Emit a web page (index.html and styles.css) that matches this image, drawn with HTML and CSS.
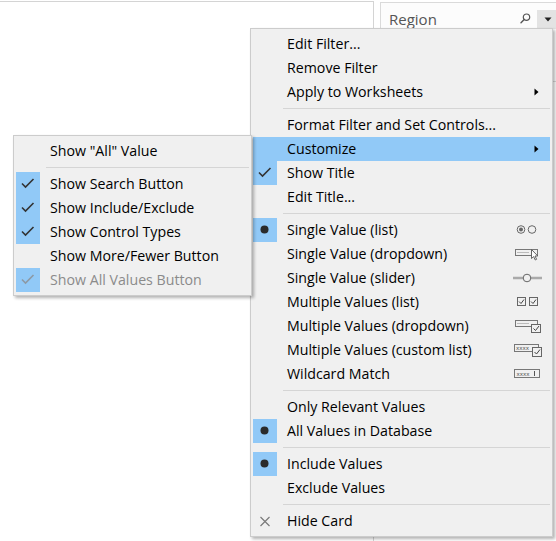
FILE: index.html
```html
<!DOCTYPE html>
<html>
<head>
<meta charset="utf-8">
<link rel="stylesheet" href="styles.css">
</head>
<body>
<div class="page">
  <div class="sheet"></div>
  <div class="card">
    <div class="card-head">
      <span class="card-title">Region</span>
      <svg class="search" width="11" height="11" viewBox="0 0 11 11"><circle cx="6.5" cy="4.2" r="3.2" fill="none" stroke="#555" stroke-width="1.2"/><path d="M4.2 6.6 L1 9.8" stroke="#555" stroke-width="1.4" stroke-linecap="round"/></svg>
      <span class="dd-btn"><svg width="8" height="5" viewBox="0 0 8 5"><polygon points="0.5,0.5 7.5,0.5 4,4.5" fill="#222"/></svg></span>
    </div>
  </div>
</div>

<div class="menu main-menu">
  <div class="item"><span class="box"></span><span class="label">Edit Filter...</span></div>
  <div class="item"><span class="box"></span><span class="label">Remove Filter</span></div>
  <div class="item"><span class="box"></span><span class="label">Apply to Worksheets</span><svg class="arrow" width="5" height="8" viewBox="0 0 5 8"><polygon points="0.5,0.5 4.5,4 0.5,7.5" fill="#000"/></svg></div>
  <div class="sep"></div>
  <div class="item"><span class="box"></span><span class="label">Format Filter and Set Controls...</span></div>
  <div class="item hot"><span class="box"></span><span class="label">Customize</span><svg class="arrow" width="5" height="8" viewBox="0 0 5 8"><polygon points="0.5,0.5 4.5,4 0.5,7.5" fill="#000"/></svg></div>
  <div class="item"><span class="box on"><svg width="24" height="24" viewBox="0 0 24 24"><path d="M6 11.5 L9.5 15 L17.5 7" fill="none" stroke="#333" stroke-width="1.6"/></svg></span><span class="label">Show Title</span></div>
  <div class="item"><span class="box"></span><span class="label">Edit Title...</span></div>
  <div class="sep"></div>
  <div class="item"><span class="box on"><svg width="24" height="24" viewBox="0 0 24 24"><circle cx="11.5" cy="11.5" r="4" fill="#2b2b2b"/></svg></span><span class="label">Single Value (list)</span>
    <svg class="ico" width="30" height="16" viewBox="0 0 30 16"><circle cx="8" cy="7.5" r="3.8" fill="none" stroke="#666" stroke-width="1"/><circle cx="8" cy="7.5" r="2" fill="#666"/><circle cx="19" cy="7.5" r="3.8" fill="none" stroke="#666" stroke-width="1"/></svg></div>
  <div class="item"><span class="box"></span><span class="label">Single Value (dropdown)</span>
    <svg class="ico" width="30" height="16" viewBox="0 0 30 16"><rect x="2.5" y="3.5" width="22" height="6" fill="#f0f0f0" stroke="#777" stroke-width="1"/><path d="M4 6.5 H16" stroke="#bbb" stroke-width="1"/><path d="M18.5 3.5 L18.5 12.5 L20.6 10.6 L22.3 14 L23.6 13.3 L22 10 L24.8 10 Z" fill="#fff" stroke="#555" stroke-width="0.9" stroke-linejoin="round"/></svg></div>
  <div class="item"><span class="box"></span><span class="label">Single Value (slider)</span>
    <svg class="ico" width="30" height="16" viewBox="0 0 30 16"><path d="M0 8 H29" stroke="#aaa" stroke-width="2.5"/><circle cx="14" cy="8" r="3.8" fill="#f0f0f0" stroke="#666" stroke-width="1"/></svg></div>
  <div class="item"><span class="box"></span><span class="label">Multiple Values (list)</span>
    <svg class="ico" width="30" height="16" viewBox="0 0 30 16"><rect x="4.5" y="3.5" width="8" height="8" fill="none" stroke="#666" stroke-width="1"/><path d="M6 7.5 L8 9.5 L11 5.5" fill="none" stroke="#444" stroke-width="1"/><rect x="16.5" y="3.5" width="8" height="8" fill="none" stroke="#666" stroke-width="1"/><path d="M18 7.5 L20 9.5 L23 5.5" fill="none" stroke="#444" stroke-width="1"/></svg></div>
  <div class="item"><span class="box"></span><span class="label">Multiple Values (dropdown)</span>
    <svg class="ico" width="30" height="16" viewBox="0 0 30 16"><rect x="2.5" y="2.5" width="22" height="6" fill="#f0f0f0" stroke="#777" stroke-width="1"/><path d="M4 5.5 H16" stroke="#bbb" stroke-width="1"/><rect x="18.5" y="6.5" width="9" height="8" fill="#f0f0f0" stroke="#666" stroke-width="1"/><path d="M20.5 10.5 L22.5 12.5 L26 8" fill="none" stroke="#444" stroke-width="1"/></svg></div>
  <div class="item"><span class="box"></span><span class="label">Multiple Values (custom list)</span>
    <svg class="ico" width="30" height="16" viewBox="0 0 30 16"><rect x="1.5" y="2.5" width="24" height="7" fill="#f0f0f0" stroke="#777" stroke-width="1"/><text x="3" y="8.4" font-family="DejaVu Sans, sans-serif" font-size="5.5" fill="#555">xxxx</text><rect x="19.5" y="5.5" width="9" height="9" fill="#f0f0f0" stroke="#666" stroke-width="1"/><path d="M21.5 10 L23.5 12 L27 7.5" fill="none" stroke="#444" stroke-width="1"/></svg></div>
  <div class="item"><span class="box"></span><span class="label">Wildcard Match</span>
    <svg class="ico" width="30" height="16" viewBox="0 0 30 16"><rect x="1.5" y="3.5" width="25" height="8" fill="#f0f0f0" stroke="#777" stroke-width="1"/><text x="3.5" y="9.6" font-family="DejaVu Sans, sans-serif" font-size="5.5" fill="#555">xxxx</text><path d="M21.5 5 V10" stroke="#555" stroke-width="1"/></svg></div>
  <div class="sep"></div>
  <div class="item"><span class="box"></span><span class="label">Only Relevant Values</span></div>
  <div class="item"><span class="box on"><svg width="24" height="24" viewBox="0 0 24 24"><circle cx="11.5" cy="11.5" r="4" fill="#2b2b2b"/></svg></span><span class="label">All Values in Database</span></div>
  <div class="sep"></div>
  <div class="item"><span class="box on"><svg width="24" height="24" viewBox="0 0 24 24"><circle cx="11.5" cy="11.5" r="4" fill="#2b2b2b"/></svg></span><span class="label">Include Values</span></div>
  <div class="item"><span class="box"></span><span class="label">Exclude Values</span></div>
  <div class="sep"></div>
  <div class="item"><span class="box"><svg width="24" height="24" viewBox="0 0 24 24"><path d="M7.5 8 L16.5 17 M16.5 8 L7.5 17" fill="none" stroke="#7a7a7a" stroke-width="1.2"/></svg></span><span class="label">Hide Card</span></div>
</div>

<div class="menu sub-menu">
  <div class="item"><span class="box"></span><span class="label">Show "All" Value</span></div>
  <div class="sep"></div>
  <div class="item"><span class="box on"><svg width="24" height="24" viewBox="0 0 24 24"><path d="M6 11.5 L9.5 15 L17.5 7" fill="none" stroke="#333" stroke-width="1.6"/></svg></span><span class="label">Show Search Button</span></div>
  <div class="item"><span class="box on"><svg width="24" height="24" viewBox="0 0 24 24"><path d="M6 11.5 L9.5 15 L17.5 7" fill="none" stroke="#333" stroke-width="1.6"/></svg></span><span class="label">Show Include/Exclude</span></div>
  <div class="item"><span class="box on"><svg width="24" height="24" viewBox="0 0 24 24"><path d="M6 11.5 L9.5 15 L17.5 7" fill="none" stroke="#333" stroke-width="1.6"/></svg></span><span class="label">Show Control Types</span></div>
  <div class="item"><span class="box"></span><span class="label">Show More/Fewer Button</span></div>
  <div class="item disabled"><span class="box on"><svg width="24" height="24" viewBox="0 0 24 24"><path d="M6 11.5 L9.5 15 L17.5 7" fill="none" stroke="#8d99a4" stroke-width="1.6"/></svg></span><span class="label">Show All Values Button</span></div>
</div>
</body>
</html>
```

FILE: styles.css
```css
html, body {
  margin: 0;
  padding: 0;
  background: #ffffff;
}
body {
  width: 556px;
  height: 541px;
  overflow: hidden;
  position: relative;
  font-family: "Open Sans", "Noto Sans", sans-serif;
}
.page {
  display: flex;
  align-items: flex-start;
  height: 541px;
}
.sheet {
  width: 374px;
  height: 540px;
  margin-top: 1px;
  box-sizing: border-box;
  border-top: 1px solid #d4d4d4;
  border-right: 1px solid #d4d4d4;
  background: #fff;
  flex: none;
}
.card {
  margin-left: 6px;
  margin-top: 2px;
  width: 180px;
  height: 80px;
  flex: none;
  box-sizing: border-box;
  border: 1px solid #dadada;
  background: #fcfcfc;
}
.card-head {
  display: flex;
  align-items: center;
  padding: 6px 4px 0 8px;
  height: 20px;
}
.card-title {
  flex: 1;
  font-size: 15px;
  color: #555;
  line-height: 20px;
}
.search {
  margin-right: 6px;
  margin-top: -1px;
}
.dd-btn {
  width: 22px;
  height: 19px;
  background: #e3e3e3;
  display: flex;
  align-items: center;
  justify-content: center;
  margin-right: -4px;
}
.menu {
  position: absolute;
  box-sizing: border-box;
  background: #f0f0f0;
  border: 1px solid #cccccc;
  padding: 3px 2px;
  box-shadow: 2px 2px 3px rgba(0, 0, 0, 0.3);
  display: flex;
  flex-direction: column;
}
.main-menu {
  left: 250px;
  top: 28px;
  width: 303px;
}
.sub-menu {
  left: 13px;
  top: 135px;
  width: 239px;
  z-index: 2;
}
.item {
  height: 24px;
  display: flex;
  align-items: center;
  font-size: 14.2px;
  color: #000;
}
.item.hot {
  background: #91c9f7;
}
.item.disabled {
  color: #8b8b8b;
}
.box {
  width: 24px;
  height: 24px;
  flex: none;
  display: flex;
}
.box.on {
  background: #91c9f7;
}
.label {
  flex: 1;
  padding-left: 10px;
  line-height: 24px;
  white-space: nowrap;
}
.arrow {
  margin-right: 11px;
}
.ico {
  margin-right: 7px;
}
.sep {
  height: 9px;
  display: flex;
  align-items: center;
  padding-left: 30px;
}
.sep::before {
  content: "";
  flex: 1;
  height: 1px;
  background: #d5d5d5;
}
```
